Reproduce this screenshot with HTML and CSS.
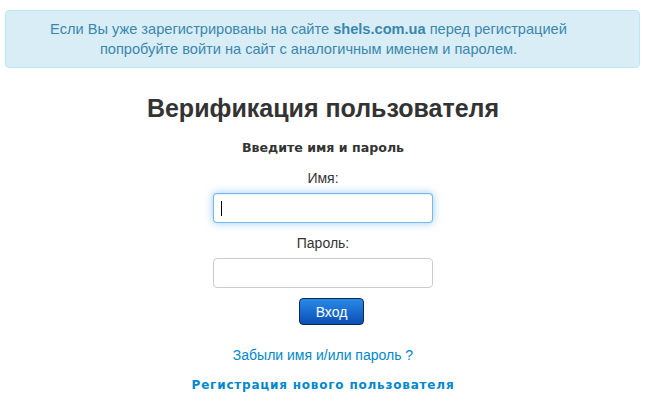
FILE: index.html
```html
<!DOCTYPE html>
<html lang="ru">

<head>
    <meta charset="UTF-8">
    <title>Верификация пользователя</title>
    <link rel="stylesheet" href="styles.css">
</head>

<body>

    <!-- Предупреждение -->
    <div class="alert-info">
        Если Вы уже зарегистрированы на сайте <b>shels.com.ua</b> перед регистрацией<br>
        попробуйте войти на сайт с аналогичным именем и паролем.
    </div>

    <div class="login">
        <h2>Верификация пользователя</h2>
        <div class="subtitle">Введите имя и пароль</div>

        <label for="username">Имя:</label>
        <div class="field focused">
            <input type="text" id="username">
        </div>

        <label for="password">Пароль:</label>
        <div class="field">
            <input type="password" id="password">
        </div>

        <button class="btn-login">Вход</button>

        <a href="#" class="forgot">Забыли имя и/или пароль ?</a>
        <a href="#" class="register">Регистрация нового пользователя</a>
    </div>

</body>

</html>
```

FILE: styles.css
```css
body {
    font-family: "Liberation Sans", Arial, sans-serif;
    font-size: 14px;
    line-height: 20px;
    color: #333;
    margin: 10px 9px 0 5px;
}

.alert-info {
    background: #d9edf7;
    border: 1px solid #bce8f1;
    border-radius: 4px;
    color: #3a87ad;
    padding: 8px 42px 8px 14px;
    text-align: center;
    font-size: 14.6px;
}

.login {
    display: flex;
    flex-direction: column;
    align-items: center;
    padding-left: 1px;
}

h2 {
    font-size: 25px;
    line-height: 30px;
    margin: 25px 0 0;
    font-weight: bold;
}

.subtitle {
    font-family: "DejaVu Sans", Verdana, sans-serif;
    font-weight: bold;
    font-size: 12.6px;
    margin-top: 15px;
}

label {
    margin-top: 10px;
}

.field {
    position: relative;
    margin-top: 5px;
}

input {
    display: block;
    width: 206px;
    height: 20px;
    padding: 4px 6px;
    border: 1px solid #ccc;
    border-radius: 4px;
    font-size: 14px;
    outline: none;
}

.focused input {
    border-color: rgba(82, 168, 236, 0.8);
    box-shadow: inset 0 1px 1px rgba(0, 0, 0, 0.075), 0 0 8px rgba(82, 168, 236, 0.6);
}

.focused::after {
    content: "";
    position: absolute;
    left: 8px;
    top: 8px;
    width: 1px;
    height: 15px;
    background: #000;
}

.btn-login {
    margin: 10px 0 0 17px;
    width: 65px;
    height: 27px;
    border: 1px solid #10284c;
    border-radius: 4px;
    background: linear-gradient(#2a8ae8, #0a4fb5);
    color: #fff;
    font-family: "Liberation Sans", Arial, sans-serif;
    font-size: 14px;
}

a {
    color: #0088cc;
    text-decoration: none;
}

.forgot {
    margin-top: 20px;
}

.register {
    font-family: "DejaVu Sans", Verdana, sans-serif;
    font-weight: bold;
    font-size: 12px;
    letter-spacing: 0.8px;
    margin-top: 10px;
}
```
